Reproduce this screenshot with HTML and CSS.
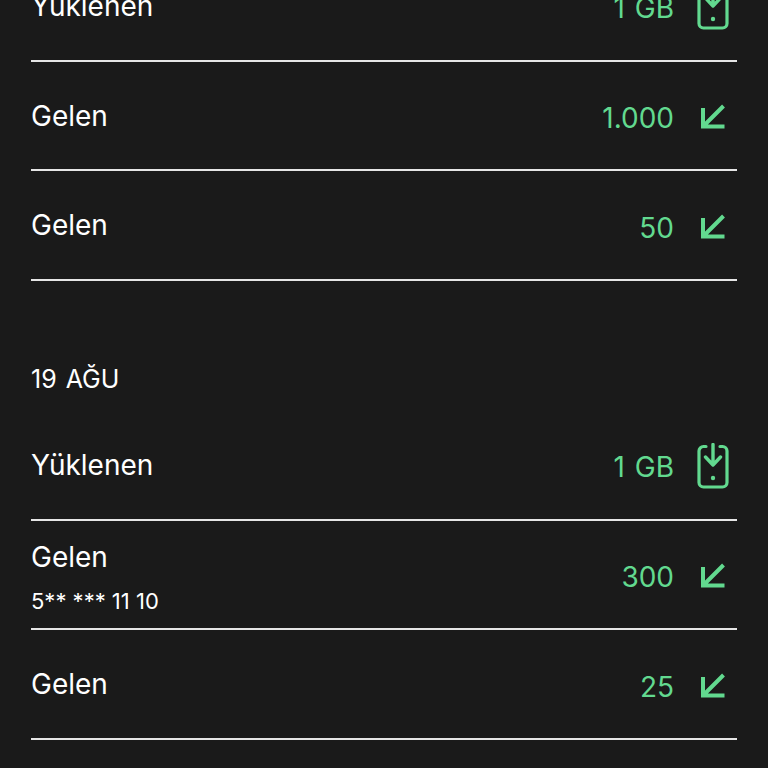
FILE: index.html
```html
<!DOCTYPE html>
<html lang="tr">
<head>
<meta charset="utf-8">
<title>Hareketler</title>
<link rel="stylesheet" href="styles.css">
</head>
<body>
<svg class="defs" width="0" height="0" aria-hidden="true">
  <symbol id="phone" viewBox="0 0 32 46">
    <path d="M9 3.500H6.500a4.500 4.500 0 0 0-4.500 4.500V39.500a4.500 4.500 0 0 0 4.500 4.500h19a4.500 4.500 0 0 0 4.500-4.500V8a4.500 4.500 0 0 0-4.500-4.500H23" fill="none" stroke="currentColor" stroke-width="3.200" stroke-linecap="round"/>
    <path d="M16 1.500v19M8.500 14l7.500 8 7.500-8" fill="none" stroke="currentColor" stroke-width="3.400" stroke-linecap="round" stroke-linejoin="round"/>
    <circle cx="16" cy="35" r="2.200" fill="currentColor"/>
  </symbol>
  <symbol id="arrow" viewBox="0 0 26 26">
    <path d="M23.500 2 4 21.500M3 4v18.500h21.500" fill="none" stroke="currentColor" stroke-width="4"/>
  </symbol>
</svg>
<main class="list">
  <section class="group">
    <div class="row">
      <div class="info"><span class="title">Yüklenen</span></div>
      <span class="amount">1 GB</span>
      <span class="icon-box"><svg class="phone"><use href="#phone"/></svg></span>
    </div>
    <div class="row">
      <div class="info"><span class="title">Gelen</span></div>
      <span class="amount">1.000</span>
      <span class="icon-box"><svg class="arrow"><use href="#arrow"/></svg></span>
    </div>
    <div class="row">
      <div class="info"><span class="title">Gelen</span></div>
      <span class="amount">50</span>
      <span class="icon-box"><svg class="arrow"><use href="#arrow"/></svg></span>
    </div>
  </section>
  <section class="group">
    <h2 class="date">19 AĞU</h2>
    <div class="row">
      <div class="info"><span class="title">Yüklenen</span></div>
      <span class="amount">1 GB</span>
      <span class="icon-box"><svg class="phone"><use href="#phone"/></svg></span>
    </div>
    <div class="row">
      <div class="info"><span class="title">Gelen</span><span class="sub">5** *** 11 10</span></div>
      <span class="amount">300</span>
      <span class="icon-box"><svg class="arrow"><use href="#arrow"/></svg></span>
    </div>
    <div class="row">
      <div class="info"><span class="title">Gelen</span></div>
      <span class="amount">25</span>
      <span class="icon-box"><svg class="arrow"><use href="#arrow"/></svg></span>
    </div>
  </section>
</main>
</body>
</html>
```
FILE: styles.css
```css
html, body {
  margin: 0;
  height: 768px;
  overflow: hidden;
  background: #1a1a1a;
}
.defs {
  display: block;
  height: 0;
}
.list {
  margin-top: -48px;
  padding: 0 31px;
  font-family: Inter, "Liberation Sans", sans-serif;
  color: #fff;
}
.group + .group {
  margin-top: 80px;
}
.date {
  margin: 0 0 14px;
  font-size: 25px;
  line-height: 36px;
  font-weight: 400;
  word-spacing: 2px;
}
.row {
  box-sizing: border-box;
  height: 109.700px;
  display: flex;
  align-items: center;
  border-bottom: 2px solid #e6e6e6;
}
.info {
  flex: 1;
  display: flex;
  flex-direction: column;
}
.title {
  font-size: 28px;
  line-height: 36px;
}
.sub {
  font-size: 22px;
  line-height: 28px;
  margin-top: 12px;
}
.row:has(.sub) .info {
  margin-top: 4px;
}
.amount {
  font-size: 28px;
  line-height: 36px;
  color: #62d98f;
  padding-top: 5px;
  word-spacing: 2px;
}
.icon-box {
  width: 63px;
  display: flex;
  justify-content: flex-end;
  color: #62d98f;
}
.phone {
  width: 32px;
  height: 46px;
  margin-right: 8px;
  margin-top: 3px;
}
.arrow {
  width: 26px;
  height: 26px;
  margin-right: 11px;
  margin-top: 3px;
}
```
